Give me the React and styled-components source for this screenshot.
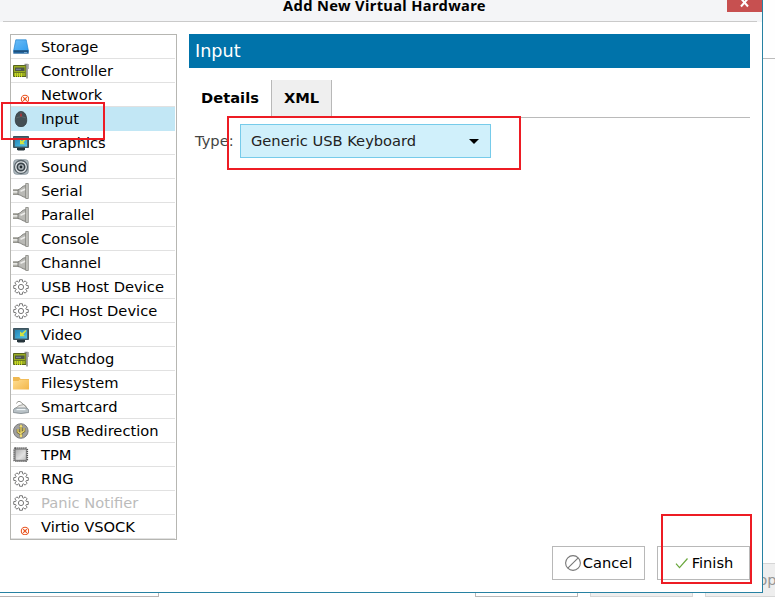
import React from "react";
import styled, { createGlobalStyle, css } from "styled-components";

const Global = createGlobalStyle`
  * { box-sizing: border-box; }
  body { margin: 0; background: #fefefe; }
  button { font: inherit; color: inherit; margin: 0; }
`;

const Desktop = styled.main`
  position: relative;
  display: flex;
  flex-direction: column;
  justify-content: space-between;
  width: 775px;
  height: 600px;
  overflow: hidden;
  background: #fefefe;
  font: 14.67px/24px "DejaVu Sans", sans-serif;
  color: #000;
`;

const BackPanel = styled.div`
  height: 59px;
  border-bottom: 1px solid #bbb;
`;

const BackButtons = styled.div`
  display: flex;
  gap: 12px;
  height: 34px;
  margin-bottom: 3px;
`;

const BackList = styled.div`
  flex: none;
  width: 159px;
  margin-right: 304px;
  border: 1px solid #b8b4b4;
  border-left: 0;
`;

const BackButton = styled.div`
  flex: none;
  width: 103px;
  padding: 4px 0 0 42px;
  border: 1px solid ${(p) => (p.$disabled ? "#d6d6d6" : "#b8b8b8")};
  background: ${(p) => (p.$disabled ? "#eeeeee" : "#fefefe")};
  color: #969696;
`;

const Dialog = styled.section`
  position: absolute;
  left: 0;
  top: 0;
  display: flex;
  flex-direction: column;
  width: 763px;
  height: 593px;
  border: solid #2681a2;
  border-width: 0 1px 1px 0;
  background: #fff;
`;

const TitleBar = styled.header`
  display: grid;
  grid-template-columns: 42px 1fr 35px;
  height: 22px;
  background: linear-gradient(#cacaca, #cacaca) 3px 21px / 754px 1px no-repeat #f4f5f7;
`;

const Title = styled.h1`
  grid-column: 2;
  margin: -7px 0 0;
  font: bold 14.67px/24px "Noto Sans", sans-serif;
  letter-spacing: 0.35px;
  text-align: center;
`;

const CloseButton = styled.button`
  display: block;
  height: 12px;
  padding: 0;
  border: 0;
  background: #c75050;
  svg { display: block; }
`;

const Body = styled.div`
  display: flex;
  gap: 12px;
  padding: 12px 12px 0 10px;
`;

const DeviceList = styled.ul`
  flex: none;
  width: 167px;
  height: 506px;
  margin: 0;
  padding: 0 1px 0 0;
  list-style: none;
  border: 1px solid #b6b6b2;
`;

const DeviceRow = styled.li`
  display: flex;
  align-items: center;
  gap: 12px;
  height: 24px;
  padding-left: 2px;
  border-bottom: 1px solid #e1e1e1;
  white-space: nowrap;
  svg { flex: none; display: block; }
  ${(p) => p.$selected && css`background: #c2e7f5; border-color: #c2e7f5;`}
  ${(p) => p.$disabled && css`color: #bbb;`}
`;

const Pane = styled.div`
  flex: 1;
  min-width: 0;
`;

const Banner = styled.h2`
  height: 34px;
  margin: 0 0 12px;
  padding-left: 6px;
  background: #0073aa;
  color: #fff;
  font: 17.6px/34px "DejaVu Sans", sans-serif;
`;

const Tabs = styled.div`
  display: flex;
  height: 38px;
  border-bottom: 1px solid #bababa;
`;

const Tab = styled.button`
  width: ${(p) => (p.$idle ? 61 : 82)}px;
  height: ${(p) => (p.$idle ? 37 : 38)}px;
  padding: 0 0 ${(p) => (p.$idle ? 1 : 2)}px;
  border: solid #b8b8b8;
  border-width: 0 ${(p) => (p.$idle ? "1px" : 0)};
  background: ${(p) => (p.$idle ? "#efefef" : "#fff")};
  font-weight: bold;
`;

const Field = styled.label`
  display: flex;
  align-items: center;
  gap: 6px;
  margin-top: 6px;
  padding-left: 6px;
  color: #444;
`;

const FieldLabel = styled.span`
  width: 39px;
`;

const Combo = styled.button`
  display: flex;
  align-items: center;
  justify-content: space-between;
  width: 251px;
  height: 34px;
  padding: 0 11px 0 10px;
  border: 1px solid #76cbea;
  background: #d0f0fb;
  color: #222;
`;

const Actions = styled.footer`
  display: flex;
  justify-content: flex-end;
  gap: 12px;
  margin-top: 6px;
  padding-right: 12px;
`;

const ActionButton = styled.button`
  display: flex;
  align-items: center;
  justify-content: center;
  gap: 2px;
  width: 93px;
  height: 34px;
  padding: 0;
  border: 1px solid #b8b8b8;
  background: #fff;
  color: #000;
`;

const marks = {
  input: css`left: 1px; top: 102px; width: 104px; height: 38px;`,
  type: css`left: 227px; top: 116px; width: 294px; height: 54px;`,
  finish: css`left: 661px; top: 514px; width: 91px; height: 70px;`,
};

const Highlight = styled.div`
  position: absolute;
  border: 2px solid #ed1c24;
  pointer-events: none;
  ${(p) => marks[p.$target]}
`;

const gearPath = (() => {
  const pts = [];
  for (let i = 0; i < 8; i++) {
    const a = (i * Math.PI) / 4;
    [[-0.32, 5.4], [-0.19, 7.4], [0.19, 7.4], [0.32, 5.4]].forEach(([d, r]) =>
      pts.push(`${(8 + r * Math.sin(a + d)).toFixed(2)} ${(8 - r * Math.cos(a + d)).toFixed(2)}`)
    );
  }
  return `M${pts.join("L")}Z`;
})();

const glyphs = {
  disk: (
    <>
      <path d="M2.8.8h10.4l2.3 11.5H.5z" fill="url(#blue)" stroke="#2585cf" strokeWidth=".7" />
      <path d="M.3 11.5h15.4v3.2H.3z" fill="#24669f" />
      <path d="M1 12h14" stroke="#183d5e" />
      <path d="M11 13.5h3" stroke="#7db4de" strokeWidth=".8" />
    </>
  ),
  card: (
    <>
      <path d="M.5 2.5h12.5v11H.5z" fill="#9aac22" stroke="#56631c" />
      <path d="M2 4.5h9.5v3.5H2z" fill="#4d5648" />
      <path d="M3 6.3h5" stroke="#8088a0" />
      <path d="M2.5 10v4M4.5 10v4M6.5 10v4M8.5 10v4" stroke="#c8d926" />
      <path d="M1 9.5h11" stroke="#6b7b1e" />
      <path d="M11.5 1.5h2.5v14" fill="none" stroke="#8d8d8d" strokeWidth="1.6" />
      <path d="M15.5 1v5" stroke="#b5b5b5" />
    </>
  ),
  missing: (
    <>
      <circle cx="12" cy="12" r="3.7" fill="#fff" stroke="#e95420" strokeWidth="1.1" />
      <path d="M10.2 10.2l3.6 3.6M13.8 10.2l-3.6 3.6" stroke="#e95420" strokeWidth="1.2" />
    </>
  ),
  mouse: (
    <>
      <path d="M8 .5C4.5.5 2.5 4 2.3 8.5 2.1 13 4.3 15.7 8 15.7s5.9-2.7 5.7-7.2C13.5 4 11.5.5 8 .5z" fill="#434f54" stroke="#2f373a" strokeWidth=".8" />
      <path d="M3 7q5-3 10 0M8 .5v5" stroke="#5e6b70" fill="none" strokeWidth=".7" />
      <rect x="7" y="2.5" width="2" height="3.2" rx="1" fill="#a5363b" />
    </>
  ),
  screen: (
    <>
      <path d="M.5 1.5h15v11H.5z" fill="#47636f" stroke="#3b535e" />
      <path d="M2 3h12v8.5H2z" fill="url(#cyan)" />
      <path d="M7 4.5l2 1.5 3.5-3 .9 1-3 3.5 1.6 1.8H7z" fill="#d2e343" />
      <path d="M4 13h8v1.5l-1 1H5l-1-1z" fill="#25343b" />
    </>
  ),
  speaker: (
    <>
      <rect x=".8" y=".8" width="14.4" height="14.4" rx="2.5" fill="#b2bdc3" stroke="#8d999f" />
      <circle cx="8" cy="8" r="6.5" fill="#e7ebed" stroke="#59646a" strokeWidth="1.3" />
      <circle cx="8" cy="8" r="3.7" fill="#b4bcc0" stroke="#3a444a" strokeWidth="1.7" />
      <circle cx="8" cy="8" r="1.4" fill="#20282c" />
    </>
  ),
  plug: (
    <>
      <path d="M0 7.2h6M0 11.2h6" stroke="#96968f" strokeWidth="1.8" />
      <path d="M0 9.2h5" stroke="#d5d5d0" strokeWidth="1.5" />
      <path d="M13 2.5C9 2.7 8.5 5.5 5 7v4.5c3.5.5 4 2.5 8 3z" fill="#b9b9b5" stroke="#777773" strokeWidth=".9" />
      <path d="M7.5 8.2l5-2.2" stroke="#ececea" strokeWidth="1.7" />
      <path d="M12.7.5h2.6v15h-2.6z" fill="#c9c9c5" stroke="#85857f" strokeWidth=".8" />
    </>
  ),
  gear: (
    <>
      <path d={gearPath} fill="#fff" stroke="#777" strokeWidth="1" strokeLinejoin="round" />
      <circle cx="8" cy="8" r="2.6" fill="#fff" stroke="#777" />
    </>
  ),
  folder: (
    <>
      <path d="M0 2h6l1.5 2H16v10.5H0z" fill="url(#folder)" />
      <path d="M0 2h6l1.5 2H16v.8H6.5L5.5 6H0z" fill="#efb851" />
    </>
  ),
  reader: (
    <>
      <path d="M3 9l3-2.5 5-1 3 3.5" fill="#e8e8e6" stroke="#a3a39e" />
      <path d="M3.5 4.5q1-3 3.5-2l6.5 5.5" stroke="#969690" fill="none" />
      <path d="M2 9h12l1.7 2v2.5q-7.7 2-15.4 0V11z" fill="#b8c1c6" stroke="#7b8489" strokeWidth=".8" />
      <path d="M3.5 10.5h9" stroke="#eff5f8" strokeWidth="1.3" />
    </>
  ),
  usb: (
    <>
      <circle cx="7.8" cy="8" r="7.3" fill="#a0a0a0" stroke="#7c7c7c" />
      <path d="M8 2v12M8 11L5 9V6M8 10l3-2V5" stroke="#6b612d" strokeWidth="2.6" fill="none" />
      <path d="M8 2v12M8 11L5 9V6M8 10l3-2V5" stroke="#f0dc72" strokeWidth="1.3" fill="none" />
      <circle cx="8" cy="13" r="1.3" fill="#f0dc72" />
      <path d="M6.3 4L8 1.3 9.7 4z" fill="#f0dc72" />
    </>
  ),
  chip: (
    <>
      <rect x="1.3" y="1.3" width="12.8" height="12.8" rx="1" fill="none" stroke="#555" strokeWidth="2" strokeDasharray="1.2 .8" />
      <rect x="2.1" y="2.1" width="11.2" height="11.2" fill="url(#metal)" stroke="#6e6e6e" strokeWidth=".9" />
    </>
  ),
};

const Glyph = ({ name }) => (
  <svg width="16" height="16" viewBox="0 0 16 16">{glyphs[name]}</svg>
);

const devices = [
  ["Storage", "disk"],
  ["Controller", "card"],
  ["Network", "missing"],
  ["Input", "mouse"],
  ["Graphics", "screen"],
  ["Sound", "speaker"],
  ["Serial", "plug"],
  ["Parallel", "plug"],
  ["Console", "plug"],
  ["Channel", "plug"],
  ["USB Host Device", "gear"],
  ["PCI Host Device", "gear"],
  ["Video", "screen"],
  ["Watchdog", "card"],
  ["Filesystem", "folder"],
  ["Smartcard", "reader"],
  ["USB Redirection", "usb"],
  ["TPM", "chip"],
  ["RNG", "gear"],
  ["Panic Notifier", "gear"],
  ["Virtio VSOCK", "missing"],
];

const Gradients = styled.svg`
  position: absolute;
`;

export default function App() {
  return (
    <Desktop>
      <Global />
      <Gradients width="0" height="0">
        <defs>
          <linearGradient id="blue" x1="0" y1="0" x2="1" y2="1">
            <stop offset="0" stopColor="#6cbcf5" />
            <stop offset="1" stopColor="#2f9df0" />
          </linearGradient>
          <linearGradient id="cyan" x1="0" y1="0" x2="1" y2="1">
            <stop offset="0" stopColor="#2585b5" />
            <stop offset="1" stopColor="#4fc3ea" />
          </linearGradient>
          <linearGradient id="folder" x1="0" y1="0" x2="1" y2="1">
            <stop offset="0" stopColor="#ffe29a" />
            <stop offset="1" stopColor="#f3b649" />
          </linearGradient>
          <linearGradient id="metal" x1="0" y1="0" x2="1" y2="1">
            <stop offset="0" stopColor="#ababab" />
            <stop offset=".6" stopColor="#e2e2e2" />
            <stop offset="1" stopColor="#bdbdbd" />
          </linearGradient>
        </defs>
      </Gradients>
      <BackPanel />
      <BackButtons>
        <BackList />
        <BackButton />
        <BackButton $disabled />
        <BackButton $disabled>Apply</BackButton>
      </BackButtons>

      <Dialog>
        <TitleBar>
          <Title>Add New Virtual Hardware</Title>
          <CloseButton aria-label="Close">
            <svg width="35" height="12" viewBox="0 0 35 12">
              <path d="M14 -1.5l7 8M21 -1.5l-7 8" stroke="#fff" strokeWidth="2" />
            </svg>
          </CloseButton>
        </TitleBar>
        <Body>
          <DeviceList>
            {devices.map(([name, icon]) => (
              <DeviceRow key={name} $selected={name === "Input"} $disabled={name === "Panic Notifier"}>
                <Glyph name={icon} />
                {name}
              </DeviceRow>
            ))}
          </DeviceList>
          <Pane>
            <Banner>Input</Banner>
            <Tabs>
              <Tab>Details</Tab>
              <Tab $idle>XML</Tab>
            </Tabs>
            <Field>
              <FieldLabel>Type:</FieldLabel>
              <Combo>
                Generic USB Keyboard
                <svg width="10" height="5" viewBox="0 0 10 5">
                  <path d="M0 0h10L5 5z" fill="#000" />
                </svg>
              </Combo>
            </Field>
          </Pane>
        </Body>
        <Actions>
          <ActionButton>
            <svg width="16" height="16" viewBox="0 0 16 16">
              <circle cx="8" cy="8" r="7.4" fill="none" stroke="#777" strokeWidth="1.1" />
              <path d="M2.8 13.2L13.2 2.8" stroke="#777" strokeWidth="1.1" />
            </svg>
            Cancel
          </ActionButton>
          <ActionButton>
            <svg width="16" height="16" viewBox="0 0 16 16">
              <path d="M2 8.7l3.5 4L13.5 3.5" fill="none" stroke="#69a73c" strokeWidth="1.2" />
            </svg>
            Finish
          </ActionButton>
        </Actions>
      </Dialog>

      <Highlight $target="input" />
      <Highlight $target="type" />
      <Highlight $target="finish" />
    </Desktop>
  );
}
